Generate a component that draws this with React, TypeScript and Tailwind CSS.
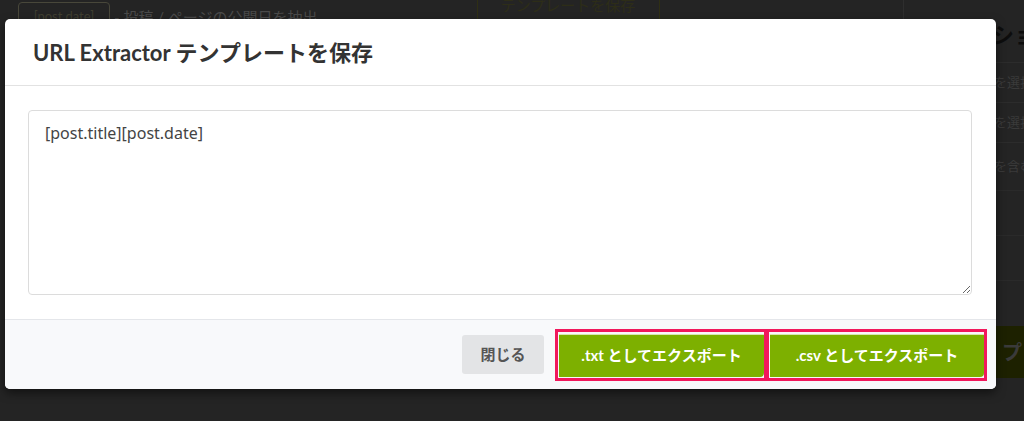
import React from "react";

const JP = "font-['Lato','Noto_Sans_CJK_JP',sans-serif]";

function BackgroundPage() {
  return (
    <div className="flex h-full w-full bg-[#242424]">
      {/* left settings area */}
      <div className="w-[994px] shrink-0">
        <div className="flex items-start pt-[2px] pl-[18px]">
          <span className="flex h-[30px] w-[92px] items-center justify-center rounded-[4px] border border-[#48473a] text-[13px] text-[#3f3e30]">
            [post.date]
          </span>
          <span className="ml-[4px] pt-[4px] text-[15px] text-[#4a4a4a]">- 投稿 / ページの公開日を抽出</span>
          <span className="ml-[159px] -mt-[12px] flex h-[31px] w-[183px] items-center justify-center border border-[#2f2f14] text-[15px] text-[#2d2d18]">
            テンプレートを保存
          </span>
          <span className="ml-[243px] -mt-[4px] h-[30px] w-px bg-[#2e2e2e]" />
        </div>
      </div>

      {/* right sidebar */}
      <div className="flex flex-1 flex-col overflow-hidden whitespace-nowrap pt-[22px]">
        <div className="-ml-[2px] pb-[14px] text-[22px] font-bold leading-[26px] text-[#0d0d0d]">ショ</div>
        <div className="flex h-[40px] items-center border-t border-[#2c2c2c] text-[13px] text-[#3a3a3a]">を選択</div>
        <div className="flex h-[40px] items-center border-t border-[#2c2c2c] text-[13px] text-[#3a3a3a]">を選択</div>
        <div className="flex h-[48px] items-center border-t border-[#2c2c2c] text-[13px] text-[#3a3a3a]">を含む</div>
        <div className="h-[45px] border-t border-[#2a2a2a]" />
        <div className="h-[45px] border-t border-[#2a2a2a]" />
        <div className="h-[46px] border-t border-[#2a2a2a]" />
        <div className="flex h-[52px] items-center bg-[#1d2100] pl-[8px] text-[20px] font-bold text-[#3a3a3a]">
          プ
        </div>
      </div>
    </div>
  );
}

function ExportButton({ label, width }: { label: string; width: string }) {
  return (
    <div className="border-[3px] border-[#f1185c] pt-[2px] pb-px pl-px">
      <button
        className={`${width} h-[43px] rounded-br-[4px] border-t border-white/70 bg-[#7db000] text-[15px] font-bold text-white`}
      >
        {label}
      </button>
    </div>
  );
}

export default function App() {
  return (
    <div className={`relative h-[421px] w-[1024px] overflow-hidden ${JP}`}>
      <BackgroundPage />

      {/* modal */}
      <div className="absolute left-[5px] top-[19px] flex w-[991px] flex-col overflow-hidden rounded-[5px] bg-white shadow-[0_4px_10px_rgba(0,0,0,0.5)]">
        <div className="flex h-[67px] items-center border-b border-[#e2e2e2] px-[28px]">
          <h2 className="text-[22px] font-bold text-[#333]">URL Extractor テンプレートを保存</h2>
        </div>

        <div className="px-[23px] pt-[24px] pb-[24px] pr-[24px]">
          <textarea
            className="block h-[185px] w-full resize-y rounded-[4px] border border-[#dcdcdc] px-[16px] pt-[10px] pb-[12px] font-['Noto_Sans',sans-serif] text-[16px] text-[#444] outline-none"
            defaultValue="[post.title][post.date]"
          />
        </div>

        <div className="flex h-[70px] items-center justify-end border-t border-[#e4e6ea] bg-[#f8f9fb] pr-[9px]">
          <button className="mr-[11px] h-[39px] w-[82px] rounded-[3px] bg-[#e3e4e6] text-[15px] font-bold text-[#555]">
            閉じる
          </button>
          <ExportButton label=".txt としてエクスポート" width="w-[205px]" />
          <div className="-ml-px">
            <ExportButton label=".csv としてエクスポート" width="w-[214px]" />
          </div>
        </div>
      </div>
    </div>
  );
}
